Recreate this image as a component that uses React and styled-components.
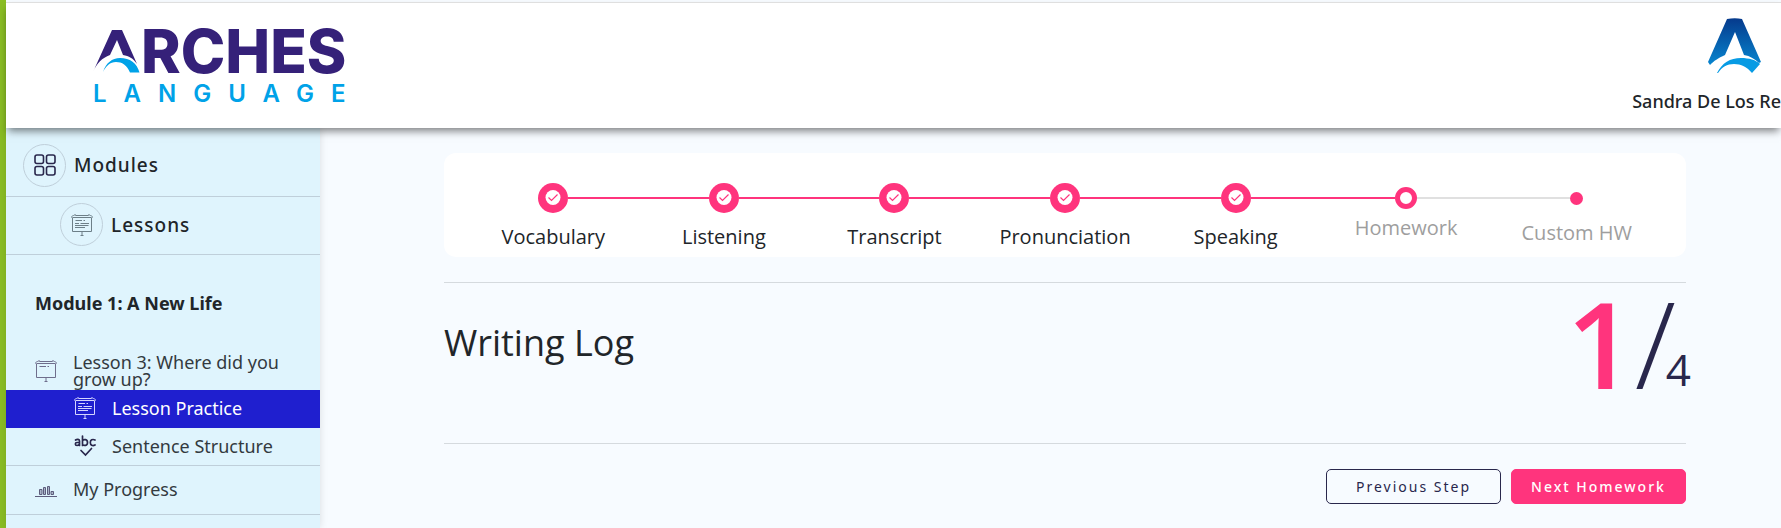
import React from "react";
import styled, { createGlobalStyle, css } from "styled-components";

const GlobalStyle = createGlobalStyle`
  * {
    box-sizing: border-box;
  }

  body {
    margin: 0;
    background: #f7fbff;
    color: #212529;
    font-family: "Open Sans", "Noto Sans", sans-serif;
    overflow: hidden;
  }
`;

const Root = styled.div`
  display: flex;
  flex-direction: column;
  min-height: 100vh;
  border-left: 6px solid #8abd24;
`;

const Header = styled.header`
  position: relative;
  z-index: 1;
  display: flex;
  justify-content: space-between;
  align-items: flex-start;
  margin-top: 2px;
  height: 126px;
  padding-left: 84px;
  border-top: 1px solid #dfdfdf;
  background: #fff;
  box-shadow: 0 5px 8px -2px rgba(0, 0, 0, 0.5);
`;

const LogoLink = styled.a`
  display: block;
  margin-top: 8px;
`;

const UserBox = styled.div`
  display: flex;
  flex-direction: column;
  align-items: flex-end;
  padding-top: 15px;
`;

const UserMark = styled.svg`
  margin-right: 19px;
`;

const UserName = styled.div`
  margin-top: 15px;
  font-family: "Noto Sans", sans-serif;
  font-size: 18px;
  font-weight: 500;
  line-height: 24px;
  white-space: nowrap;
`;

const Body = styled.div`
  display: flex;
  flex: 1;
`;

const Sidebar = styled.nav`
  flex: none;
  width: 314px;
  background: #dff4fd;
  box-shadow: 0 0 8px rgba(0, 0, 0, 0.12);
  font-family: "Noto Sans", sans-serif;
`;

const SideHeading = styled.a`
  display: flex;
  align-items: center;
  gap: 8px;
  height: ${(props) => (props.$nested ? "58px" : "69px")};
  padding-top: ${(props) => (props.$nested ? "0" : "8px")};
  padding-bottom: 2px;
  padding-left: ${(props) => (props.$nested ? "54px" : "17px")};
  border-bottom: 1px solid #bfcfda;
  color: #212529;
  font-size: 19px;
  font-weight: 500;
  letter-spacing: 1px;
  text-decoration: none;
`;

const IconCircle = styled.span`
  display: flex;
  align-items: center;
  justify-content: center;
  width: 43px;
  height: 43px;
  border: 1px solid #bfcfda;
  border-radius: 50%;
`;

const ModuleTitle = styled.h2`
  margin: 0;
  padding: 35px 0 37px 29px;
  font-size: 18px;
  font-weight: 700;
  line-height: 26px;
`;

const SideItem = styled.a`
  display: flex;
  align-items: center;
  gap: 16px;
  height: ${(props) => props.$height}px;
  padding-bottom: 2px;
  padding-left: 29px;
  color: #333a40;
  font-size: 18px;
  line-height: 17px;
  text-decoration: none;

  ${(props) =>
    props.$nested &&
    css`
      padding-left: 68px;
    `}

  ${(props) =>
    props.$active &&
    css`
      background: #1f1fcf;
      color: #fff;
    `}

  ${(props) =>
    props.$divider &&
    css`
      padding-bottom: 1px;
      border-bottom: 1px solid #bfcfda;
    `}

  svg {
    flex: none;
  }
`;

const Main = styled.main`
  flex: 1;
  padding: 25px 95px 24px 124px;
`;

const Steps = styled.ol`
  display: flex;
  height: 104px;
  margin: 0 0 25px;
  padding: 30px 24px 0;
  border-radius: 12px;
  background: #fff;
  list-style: none;
`;

const StepItem = styled.li`
  flex: 1;
  display: flex;
  flex-direction: column;
  align-items: center;
`;

const StepTrack = styled.div`
  display: flex;
  align-items: center;
  align-self: stretch;
  height: 30px;
`;

const StepLine = styled.span`
  flex: 1;
  height: 2px;
  background: ${(props) => props.$color};
`;

const dotStyles = {
  done: css`
    width: 30px;
    height: 30px;
    background: #ff347d;
  `,
  current: css`
    width: 22px;
    height: 22px;
    border: 5px solid #ff347d;
    background: #fff;
  `,
  upcoming: css`
    width: 13px;
    height: 13px;
    background: #ff347d;
  `,
};

const StepDot = styled.span`
  display: flex;
  align-items: center;
  justify-content: center;
  border-radius: 50%;
  ${(props) => dotStyles[props.$status]}
`;

const labelOffsets = { done: "10px", current: "1px", upcoming: "6px" };

const StepLabel = styled.span`
  margin-top: ${(props) => labelOffsets[props.$status]};
  color: ${(props) => (props.$status === "done" ? "#212529" : "#9e9e9e")};
  font-size: 20px;
  line-height: 28px;
`;

const TitleRow = styled.section`
  display: flex;
  justify-content: space-between;
  align-items: flex-start;
  height: 162px;
  border-top: 1px solid #d5dade;
  border-bottom: 1px solid #d5dade;
`;

const Title = styled.h1`
  margin: 36px 0 0;
  font-size: 36px;
  font-weight: 400;
  line-height: 48px;
`;

const Counter = styled.div`
  display: flex;
  align-items: flex-end;
  margin-top: -4px;
  margin-right: -5px;
  color: #29274c;
  font-size: 120px;
  line-height: 128px;
`;

const CounterCurrent = styled.span`
  color: #ff347d;
  font-weight: 600;
`;

const CounterSlash = styled.span`
  font-weight: 300;
`;

const CounterTotal = styled.span`
  margin-bottom: 16px;
  margin-left: -10px;
  font-size: 44px;
  line-height: 44px;
`;

const Actions = styled.div`
  display: flex;
  justify-content: flex-end;
  gap: 10px;
  margin-top: 25px;
`;

const Button = styled.button`
  width: 175px;
  height: 35px;
  padding: 0 0 1px;
  border: 1px solid ${(props) => (props.$primary ? "#ff347d" : "#29274c")};
  border-radius: 5px;
  background: ${(props) => (props.$primary ? "#ff347d" : "#f7fbff")};
  color: ${(props) => (props.$primary ? "#fff" : "#29274c")};
  font-family: "Noto Sans", sans-serif;
  font-size: 14px;
  font-weight: ${(props) => (props.$primary ? 500 : 400)};
  letter-spacing: 2px;
  cursor: pointer;
`;

const Logo = () => (
  <svg width="290" height="110" viewBox="90 10 290 110">
    <path
      d="M112 29H122L137 63C133 57 129 55 123 54L117 39L110 54C102 57 97 62 93 71Z"
      fill="#352179"
    />
    <path
      d="M103 71C106 62 112 57 120 57C130 57 137 62 139.500 71.500H130C127 64 122 61 116 61C110 61 106 65 103 71Z"
      fill="#00a2e8"
    />
    <text
      x="141"
      y="72"
      fill="#352179"
      fontFamily="Inter, sans-serif"
      fontSize="60"
      fontWeight="800"
    >
      RCHES
    </text>
    <text
      x="93"
      y="101"
      fill="#00a2e8"
      fontFamily="Inter, sans-serif"
      fontSize="24"
      fontWeight="600"
      letterSpacing="17"
    >
      LANGUAGE
    </text>
  </svg>
);

const ArchMark = () => (
  <UserMark width="54" height="56" viewBox="0 0 54 56">
    <defs>
      <linearGradient id="mark" x1="0" y1="0" x2="0" y2="1">
        <stop offset="0" stopColor="#063a8c" />
        <stop offset="1" stopColor="#0785cf" />
      </linearGradient>
    </defs>
    <path
      d="M19 1Q27 -.5 34 1L53 44L51 45C47 41 42 38 36 37L27 14L17 37C10 40 6 43 2 47L0 44Z"
      fill="url(#mark)"
    />
    <path
      d="M9 55C14 45 22 40 33 40C41 40 48 42 52 46L44 55C39 49 33 46 26 46C19 46 14 49 10 55Z"
      fill="#079be4"
    />
  </UserMark>
);

const GridIcon = () => (
  <svg
    width="22"
    height="22"
    viewBox="0 0 22 22"
    fill="none"
    stroke="#29274c"
    strokeWidth="1.6"
  >
    <rect x="1" y="1" width="8.500" height="8.500" rx="2" />
    <rect x="12.500" y="1" width="8.500" height="8.500" rx="2" />
    <rect x="1" y="12.500" width="8.500" height="8.500" rx="2" />
    <rect x="12.500" y="12.500" width="8.500" height="8.500" rx="2" />
  </svg>
);

const BoardIcon = ({ color, full }) => (
  <svg
    width="22"
    height="22"
    viewBox="0 0 22 22"
    fill="none"
    stroke={color}
    strokeWidth="1"
  >
    <path d="M4.500 1.500H17.500M1.500 4.500C0 3 1 1.500 2.500 1.500L4 .7L5.500 1.500M20.500 4.500C22 3 21 1.500 19.500 1.500L18 .7L16.500 1.500M1.500 3.500H20.500" />
    <path d="M1.500 4V17.500H20.500V4M11 17.500V21M9.500 21.500H12.500" />
    <path d="M4.500 6.500H11M12.500 6.500H14" />
    {full && <path d="M4 9.500H8M9.500 9.500H18M4 11.500H17.500M4 13.500H14" />}
  </svg>
);

const AbcIcon = () => (
  <svg
    width="22"
    height="22"
    viewBox="0 0 22 22"
    fill="none"
    stroke="#29274c"
    strokeWidth="1.7"
    strokeLinecap="round"
  >
    <path d="M1.500 5C3 4 5.500 4 5.500 6V10.500M5.500 7.500H3C.8 7.500 .8 10.500 3 10.500C4.500 10.500 5.500 9.500 5.500 8.500" />
    <path d="M8.500 1V10.500M8.500 5.500C10 4 13.500 4 13.500 7.500C13.500 11 10 11 8.500 9.500" />
    <path d="M21 5C18.500 3.800 16.300 5 16.300 7.500C16.300 10 18.500 11.300 21 10" />
    <path d="M7 15.500L11.500 20L17.500 13.500" />
  </svg>
);

const ChartIcon = () => (
  <svg
    width="22"
    height="22"
    viewBox="0 0 22 22"
    fill="#a9b4c8"
    stroke="#5d5c7c"
    strokeWidth="1"
  >
    <path d="M0 17.500H22M4.500 15.500V10.500H7V15.500ZM8.500 15.500V8.500H10.500V15.500ZM12.500 15.500V7.500H14.500V15.500ZM16 15.500V12.500H18.500V15.500Z" />
  </svg>
);

const CheckIcon = () => (
  <svg width="16" height="16" viewBox="0 0 16 16">
    <circle cx="8" cy="7.500" r="7.500" fill="#fff" />
    <path
      d="M3.500 7.500L6.500 10.500L12.500 4.500"
      fill="none"
      stroke="#ff347d"
      strokeWidth="1.2"
    />
  </svg>
);

const steps = [
  { label: "Vocabulary", status: "done" },
  { label: "Listening", status: "done" },
  { label: "Transcript", status: "done" },
  { label: "Pronunciation", status: "done" },
  { label: "Speaking", status: "done" },
  { label: "Homework", status: "current" },
  { label: "Custom HW", status: "upcoming" },
];

function lineColor(index) {
  if (index < 1 || index >= steps.length) return "transparent";
  return steps[index].status === "upcoming" ? "#e0e0e0" : "#ff347d";
}

function Step({ step, index }) {
  return (
    <StepItem>
      <StepTrack>
        <StepLine $color={lineColor(index)} />
        <StepDot $status={step.status}>
          {step.status === "done" ? <CheckIcon /> : ""}
        </StepDot>
        <StepLine $color={lineColor(index + 1)} />
      </StepTrack>
      <StepLabel $status={step.status}>{step.label}</StepLabel>
    </StepItem>
  );
}

export default function App() {
  return (
    <Root>
      <GlobalStyle />
      <Header>
        <LogoLink href="#home" aria-label="Arches Language">
          <Logo />
        </LogoLink>
        <UserBox>
          <ArchMark />
          <UserName>Sandra De Los Re</UserName>
        </UserBox>
      </Header>
      <Body>
        <Sidebar>
          <SideHeading href="#modules">
            <IconCircle>
              <GridIcon />
            </IconCircle>
            Modules
          </SideHeading>
          <SideHeading href="#lessons" $nested>
            <IconCircle>
              <BoardIcon color="#6d7f88" full />
            </IconCircle>
            Lessons
          </SideHeading>
          <ModuleTitle>Module 1: A New Life</ModuleTitle>
          <SideItem href="#lesson-3" $height={37}>
            <BoardIcon color="#6f6e8c" />
            Lesson 3: Where did you grow up?
          </SideItem>
          <SideItem href="#practice" $height={38} $nested $active>
            <BoardIcon color="#d5d5ff" full />
            Lesson Practice
          </SideItem>
          <SideItem href="#structure" $height={38} $nested $divider>
            <AbcIcon />
            Sentence Structure
          </SideItem>
          <SideItem href="#progress" $height={49} $divider>
            <ChartIcon />
            My Progress
          </SideItem>
        </Sidebar>
        <Main>
          <Steps>
            {steps.map((step, index) => (
              <Step key={step.label} step={step} index={index} />
            ))}
          </Steps>
          <TitleRow>
            <Title>Writing Log</Title>
            <Counter>
              <CounterCurrent>1</CounterCurrent>
              <CounterSlash>/</CounterSlash>
              <CounterTotal>4</CounterTotal>
            </Counter>
          </TitleRow>
          <Actions>
            <Button type="button">Previous Step</Button>
            <Button type="button" $primary>
              Next Homework
            </Button>
          </Actions>
        </Main>
      </Body>
    </Root>
  );
}
